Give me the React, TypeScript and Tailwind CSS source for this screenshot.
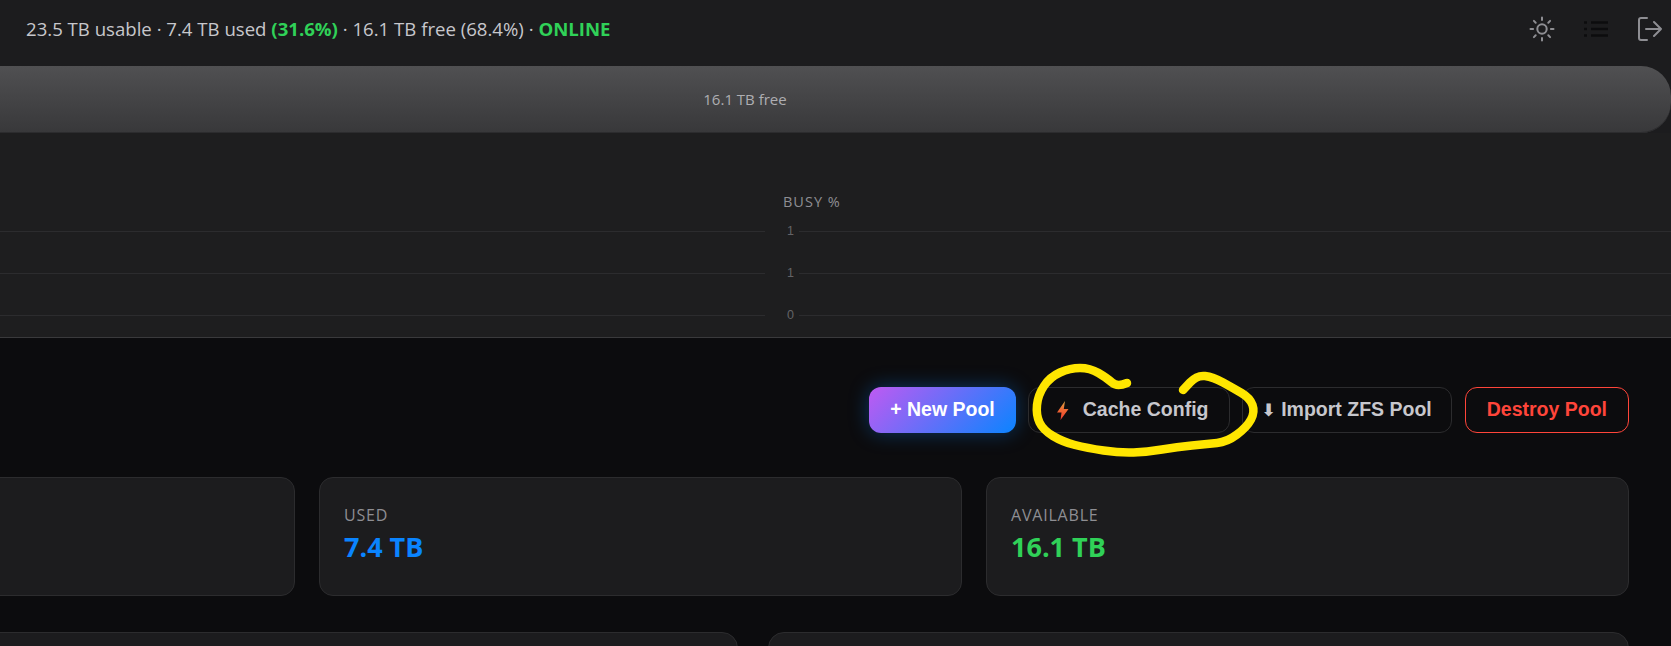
// Pool storage overview, cropped to the visible part of the page
const SANS = "font-['Open_Sans','Noto_Sans',sans-serif]";

// Freehand marker ring drawn on top of the screenshot
const markerPoints: [number, number][] = [
  [1127, 383], [1117, 387], [1107, 378], [1090, 368], [1070, 368], [1050, 377],
  [1038, 395], [1036, 415], [1043, 430], [1063, 442], [1087, 448], [1120, 453],
  [1147, 452], [1177, 447], [1207, 444], [1227, 442], [1247, 427], [1255, 412],
  [1250, 398], [1233, 388], [1213, 377], [1197, 375], [1183, 390],
];

function smoothPath(points: [number, number][]) {
  let d = `M${points[0][0]} ${points[0][1]}`;
  for (let i = 1; i < points.length - 1; i++) {
    const mx = (points[i][0] + points[i + 1][0]) / 2;
    const my = (points[i][1] + points[i + 1][1]) / 2;
    d += ` Q${points[i][0]} ${points[i][1]} ${mx} ${my}`;
  }
  const last = points[points.length - 1];
  return `${d} L${last[0]} ${last[1]}`;
}

function SunIcon() {
  return (
    <svg width="26" height="26" viewBox="0 0 26 26" fill="none" stroke="#8e8e93" strokeWidth="2" strokeLinecap="round">
      <circle cx="13" cy="13" r="4.7" />
      <path d="M13 1.5v2.6M13 21.9v2.6M1.5 13h2.6M21.9 13h2.6M4.9 4.9l1.8 1.8M19.3 19.3l1.8 1.8M4.9 21.1l1.8-1.8M19.3 6.7l1.8-1.8" />
    </svg>
  );
}

function ListIcon() {
  return (
    <svg width="26" height="20" viewBox="0 0 26 20" fill="none" stroke="#0c0c0e" strokeWidth="2.6">
      <path d="M8 3.5h17M8 10h17M8 16.5h17" />
      <path d="M1 3.5h3M1 10h3M1 16.5h3" strokeWidth="2.4" />
    </svg>
  );
}

function LogoutIcon() {
  return (
    <svg width="24" height="24" viewBox="0 0 24 24" fill="none" stroke="#8e8e93" strokeWidth="2" strokeLinecap="round" strokeLinejoin="round">
      <path d="M9 1H3a2 2 0 0 0-2 2v18a2 2 0 0 0 2 2h6" />
      <path d="M8 12h15M16 5l7 7-7 7" />
    </svg>
  );
}

function BoltIcon() {
  return (
    <svg width="12" height="19" viewBox="0 0 12 19">
      <defs>
        <linearGradient id="bolt" x1="0" y1="0" x2="0" y2="1">
          <stop offset="0" stopColor="#d9a441" />
          <stop offset="0.45" stopColor="#ef6a33" />
          <stop offset="1" stopColor="#f03a30" />
        </linearGradient>
      </defs>
      <path d="M8 0 0 11.5h4.5L3.5 19 11.5 8H6.8z" fill="url(#bolt)" />
    </svg>
  );
}

function ChartLines({ label }: { label?: boolean }) {
  return (
    <div className="flex flex-col">
      {['1', '1', '0'].map((tick, i) => (
        <div key={i} className="flex h-[42px] items-center gap-[5px]">
          {label && (
            <span className="w-[11px] text-right font-['Liberation_Sans',sans-serif] text-[12.5px] text-[#636366]">
              {tick}
            </span>
          )}
          <div className="h-px flex-1 bg-[#2c2c2e]" />
        </div>
      ))}
    </div>
  );
}

function StatCard({ label, value, color }: { label: string; value: string; color: string }) {
  return (
    <div className="flex h-[119px] flex-col rounded-[14px] border border-[#2c2c2e] bg-[#1c1c1e] px-[24px] pt-[26px]">
      {label && <div className="text-[16px] leading-[22px] tracking-[0.8px] text-[#8e8e93]">{label}</div>}
      {value && <div className={`mt-[3px] text-[27px] leading-[36px] font-bold ${color}`}>{value}</div>}
    </div>
  );
}

export default function App() {
  return (
    <div className={`relative h-[646px] w-[1671px] overflow-hidden bg-[#0c0c0e] ${SANS}`}>
      {/* Top bar */}
      <header className="flex h-[66px] items-center justify-between bg-[#1c1c1e] pr-[9px] pb-[8px] pl-[26px]">
        <p className="text-[18.6px] text-[#c7c7cc]">
          23.5 TB usable · 7.4 TB used <b className="text-[#30d158]">(31.6%)</b> · 16.1 TB free (68.4%) ·{' '}
          <b className="text-[#30d158]">ONLINE</b>
        </p>
        <div className="flex items-center">
          <SunIcon />
          <div className="ml-[28px]"><ListIcon /></div>
          <div className="ml-[29px]"><LogoutIcon /></div>
        </div>
      </header>

      {/* Capacity bar and IO charts */}
      <section className="border-b border-[#3a3a3c] bg-[#1e1e1f]">
        <div className="bg-[#1c1c1e]">
          <div className="-ml-[181px] flex h-[67px] items-center justify-center rounded-r-[30px] bg-gradient-to-b from-[#505052] to-[#38383a] text-[15px] text-[#aeaeb2] shadow-[inset_0_-1px_0_#2c2c2e]">
            16.1 TB free
          </div>
        </div>
        <div className="flex h-[204px] pt-[61px]">
          <div className="w-[765px]">
            <div className="h-[16px]" />
            <ChartLines />
          </div>
          <div className="ml-[18px] flex-1">
            <div className="h-[16px] text-[14.5px] leading-[16px] tracking-[1px] text-[#8e8e93]">BUSY %</div>
            <ChartLines label />
          </div>
        </div>
      </section>

      {/* Pool actions */}
      <main className="pt-[49px] pr-[42px]">
        <div className="flex h-[46px] justify-end gap-[12px] font-['Liberation_Sans',sans-serif] text-[19.5px] font-bold">
          <button className="rounded-[12px] bg-[linear-gradient(135deg,#bf5af2,#0a84ff)] px-[21px] text-white shadow-[0_0_20px_rgba(10,132,255,0.35)]">
            + New Pool
          </button>
          <button className="flex items-center gap-[14px] rounded-[12px] border border-[#2c2c2e] bg-[#0c0c0e] pr-[21px] pl-[28px] text-[#c7c7cc]">
            <BoltIcon />
            Cache Config
          </button>
          <button className="rounded-[12px] border border-[#2c2c2e] bg-[#0c0c0e] pr-[19px] pl-[18px] text-[#c7c7cc]">
            <span className="font-['DejaVu_Sans',sans-serif] text-[17px]">⬇</span> Import ZFS Pool
          </button>
          <button className="ml-px rounded-[12px] border border-[#ff453a] bg-[#0c0c0e] px-[21px] text-[#ff453a]">
            Destroy Pool
          </button>
        </div>

        <div className="mt-[44px] -ml-[348px] grid grid-cols-3 gap-[24px]">
          <StatCard label="" value="" color="" />
          <StatCard label="USED" value="7.4 TB" color="text-[#0a84ff]" />
          <StatCard label="AVAILABLE" value="16.1 TB" color="text-[#30d158]" />
        </div>

        <div className="mt-[36px] -ml-[123px] grid grid-cols-2 gap-[30px]">
          <div className="h-[60px] rounded-t-[16px] border border-[#2c2c2e] bg-[#1c1c1e]" />
          <div className="h-[60px] rounded-t-[16px] border border-[#2c2c2e] bg-[#1c1c1e]" />
        </div>
      </main>

      {/* Yellow marker annotation */}
      <svg className="pointer-events-none absolute inset-0" width="1671" height="646" fill="none">
        <path d={smoothPath(markerPoints)} stroke="#ffe600" strokeWidth="8.5" strokeLinecap="round" strokeLinejoin="round" />
      </svg>
    </div>
  );
}
